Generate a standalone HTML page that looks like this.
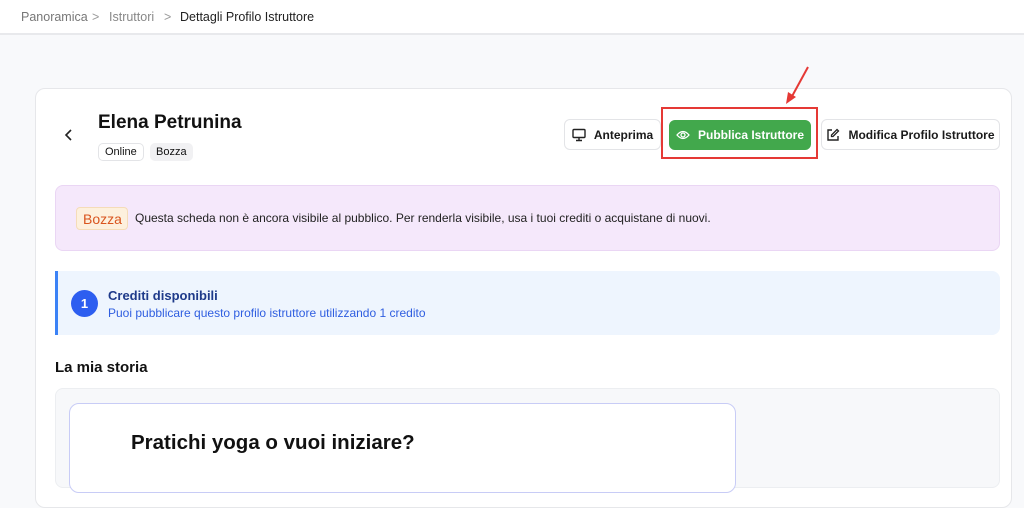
<!DOCTYPE html>
<html><head><meta charset="utf-8"><style>
*{box-sizing:border-box;margin:0;padding:0}
body{width:1024px;height:476px;overflow:hidden;background:#f8f9fb;font-family:"Liberation Sans",sans-serif;color:#111;position:relative}
.hdr{position:absolute;left:0;top:0;width:1024px;height:35px;background:#fff;border-bottom:2px solid #e8e9ec;font-size:12.5px}
.hdr span{position:absolute;top:10px}
.card{position:absolute;left:35px;top:88px;width:977px;height:420px;background:#fff;border:1px solid #e6e7ea;border-radius:10px}
.abs{position:absolute;white-space:nowrap}
.btn{position:absolute;height:31px;border:1px solid #e3e4e7;border-radius:6px;background:#fff;font-size:12px;font-weight:bold;display:flex;align-items:center;justify-content:center;gap:8px;white-space:nowrap;color:#1a1a1a}
.btn svg{flex-shrink:0}
.tag{position:absolute;top:143px;height:18px;font-size:11px;line-height:16px;border-radius:5px;padding:0 6px}
</style></head><body>
<div class="hdr"><span style="left:21px;color:#777">Panoramica</span><span style="left:92px;color:#999">&gt;</span><span style="left:109px;color:#888">Istruttori</span><span style="left:164px;color:#999">&gt;</span><span style="left:180px;color:#222">Dettagli Profilo Istruttore</span></div>
<div class="card"></div>
<svg class="abs" style="left:63px;top:128px" width="12" height="14"><path d="M8 2 L3 7 L8 12" stroke="#222" stroke-width="1.6" fill="none"/></svg>
<div class="abs" style="left:98px;top:112px;font-size:19px;font-weight:bold">Elena Petrunina</div>
<div class="tag" style="left:98px;border:1px solid #e3e4e7">Online</div>
<div class="tag" style="left:150px;background:#f1f1f3;line-height:18px">Bozza</div>
<div class="btn" style="left:564px;top:119px;width:97px"><svg width="14" height="14" viewBox="0 0 14 14"><rect x="1" y="1.5" width="12" height="8" rx="1" stroke="#222" stroke-width="1.4" fill="none"/><path d="M4 12.5h6M7 9.5v3" stroke="#222" stroke-width="1.4"/></svg>Anteprima</div>
<div class="abs" style="left:661px;top:107px;width:157px;height:52px;border:2px solid #e53935"></div>
<div class="btn" style="left:669px;top:120px;width:142px;height:30px;background:#42a84c;border-color:#42a84c;color:#fff"><svg width="14" height="12" viewBox="0 0 14 12"><path d="M1 6 Q7 -1 13 6 Q7 13 1 6Z" stroke="#fff" stroke-width="1.3" fill="none"/><circle cx="7" cy="6" r="2" stroke="#fff" stroke-width="1.3" fill="none"/></svg>Pubblica Istruttore</div>
<div class="btn" style="left:821px;top:119px;width:179px"><svg width="14" height="14" viewBox="0 0 14 14"><path d="M6 2H2v10h10V8" stroke="#222" stroke-width="1.4" fill="none"/><path d="M11 1.5l1.5 1.5L7 8.5H5.5V7z" stroke="#222" stroke-width="1.3" fill="none"/></svg>Modifica Profilo Istruttore</div>
<svg class="abs" style="left:780px;top:62px" width="34" height="46"><path d="M28 5 L10 38" stroke="#e53935" stroke-width="2"/><path d="M6 42 L8 30 L16 35Z" fill="#e53935"/></svg>
<div class="abs" style="left:55px;top:185px;width:945px;height:66px;background:#f5e8fb;border:1px solid #ead6f4;border-radius:8px"></div>
<div class="abs" style="left:76px;top:207px;width:52px;height:23px;background:#fdf0dd;border:1px solid #f5dcb8;border-radius:4px;color:#d9541e;font-size:14px;padding:3px 0 0 6px">Bozza</div>
<div class="abs" style="left:135px;top:211px;font-size:12px;color:#222">Questa scheda non è ancora visibile al pubblico. Per renderla visibile, usa i tuoi crediti o acquistane di nuovi.</div>
<div class="abs" style="left:55px;top:271px;width:945px;height:64px;background:#eef5fe;border-left:3px solid #3b82f6;border-radius:0 8px 8px 0"></div>
<div class="abs" style="left:71px;top:290px;width:27px;height:27px;border-radius:50%;background:#2d5ef0;color:#fff;font-size:13px;font-weight:bold;text-align:center;line-height:27px">1</div>
<div class="abs" style="left:108px;top:288px;font-size:13px;font-weight:bold;color:#1e3a8a">Crediti disponibili</div>
<div class="abs" style="left:108px;top:306px;font-size:12px;color:#2f5ee0">Puoi pubblicare questo profilo istruttore utilizzando 1 credito</div>
<div class="abs" style="left:55px;top:359px;font-size:15px;font-weight:bold">La mia storia</div>
<div class="abs" style="left:55px;top:388px;width:945px;height:100px;background:#f7f8fa;border:1px solid #eceef1;border-radius:8px"></div>
<div class="abs" style="left:69px;top:403px;width:667px;height:90px;background:#fff;border:1.5px solid #c8ccf6;border-radius:10px"></div>
<div class="abs" style="left:131px;top:431px;font-size:20.5px;font-weight:bold">Pratichi yoga o vuoi iniziare?</div>
</body></html>
